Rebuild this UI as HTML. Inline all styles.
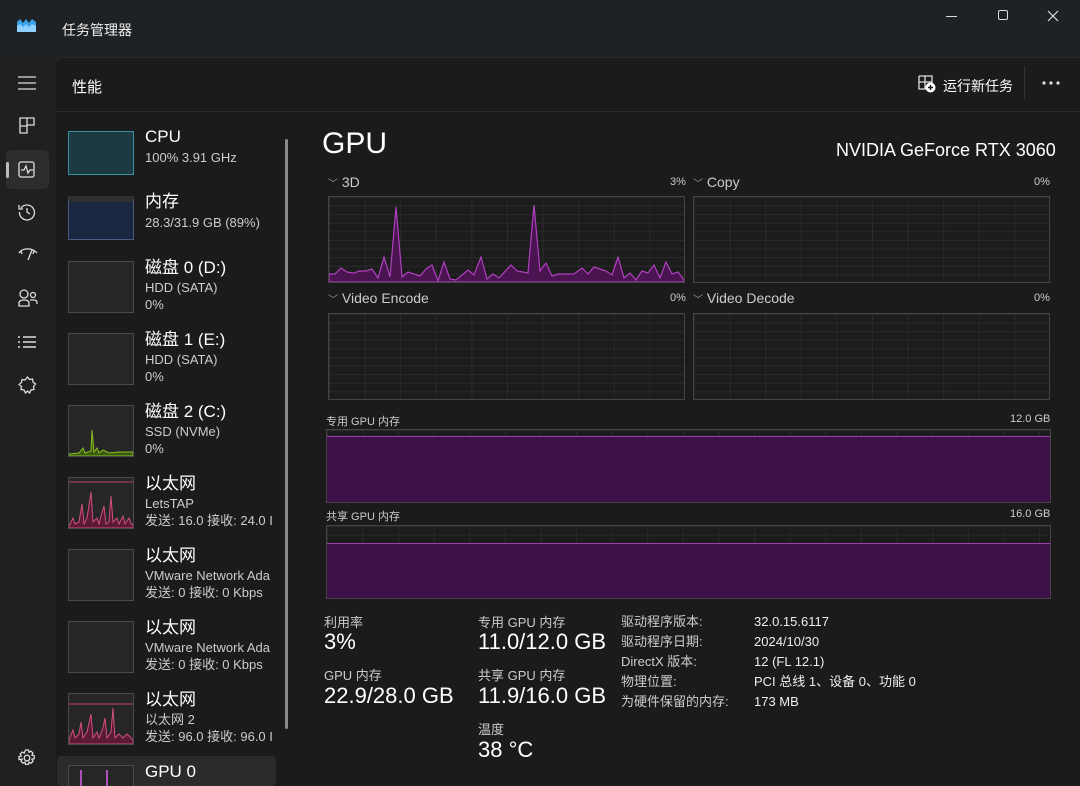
<!DOCTYPE html><html><head><meta charset="utf-8"><style>
*{margin:0;padding:0;box-sizing:border-box}
html,body{width:1080px;height:786px;overflow:hidden}
body{background:#1f2225;font-family:"Liberation Sans","Noto Sans CJK SC",sans-serif;color:#fff;position:relative}
.a{position:absolute}
.t{white-space:nowrap}
.nav{left:0;top:57px;width:56px;height:729px;background:#202020}
.main{left:56px;top:57px;width:1024px;height:729px;background:#1b1b1b;border-top-left-radius:8px;border-top:1px solid #2a2a2a}
.thumb{position:absolute;left:68px;width:66px;height:52px;border:1px solid #4a4a4a;background:#262626;overflow:hidden}
.sn{position:absolute;left:145px;font-size:17px;line-height:20px;color:#fff;white-space:nowrap}
.ss{position:absolute;left:145px;width:131px;overflow:hidden;white-space:nowrap;font-size:13px;color:#ccc;line-height:17px}
.box{position:absolute;border:1px solid #444;background:#1c1c1c;background-image:linear-gradient(#2a2a2a 1px,transparent 1px),linear-gradient(90deg,#2a2a2a 1px,transparent 1px);background-size:100% 8.6px,35.6px 100%}
.lbl{position:absolute;font-size:14px;color:#ccc}
.pct{position:absolute;font-size:11px;color:#ccc}
.ic{stroke:#ddd;fill:none;stroke-width:1.3}
.big{font-size:22px}
</style></head><body>
<svg class="a" style="left:17px;top:18px" width="19" height="14"><path d="M0 14V4l3-3 3 4 3-4 3 4 3-4 4 3v10z" fill="#3aa0e8"/><path d="M0 14V8l3-2 3 3 3-3 3 3 3-3 4 2v6z" fill="#8fd0ff"/></svg>
<div class="a t" style="left:62px;top:20px;font-size:14px;color:#eee">任务管理器</div>
<div class="a" style="left:946px;top:16px;width:11px;height:1px;background:#ddd"></div>
<div class="a" style="left:998px;top:10px;width:10px;height:10px;border:1px solid #ddd;border-radius:2px"></div>
<svg class="a" style="left:1047px;top:10px" width="12" height="12"><path d="M1 1L11 11M11 1L1 11" stroke="#ddd" stroke-width="1.2"/></svg>
<div class="a nav"></div>
<div class="a main"></div>
<svg class="a" style="left:18px;top:76px" width="18" height="14"><path d="M0 1h18M0 7h18M0 13h18" stroke="#ddd" stroke-width="1.3"/></svg>
<svg class="a" style="left:19px;top:117px" width="17" height="17"><path class="ic" d="M1 1h7v15H1zM8 1h7v7H8zM1 9h7"/></svg>
<div class="a" style="left:6px;top:150px;width:43px;height:39px;background:#2d2d2d;border-radius:5px"></div>
<div class="a" style="left:6px;top:162px;width:3px;height:16px;background:#bbb;border-radius:2px"></div>
<svg class="a" style="left:18px;top:161px" width="18" height="17"><rect class="ic" x="1" y="1" width="15" height="15" rx="2"/><path class="ic" d="M3 9h3l2-4 2 7 2-3h3"/></svg>
<svg class="a" style="left:18px;top:203px" width="18" height="18"><path class="ic" d="M3 5A7.5 7.5 0 1 1 1.5 9M1 2v4h4M9 5v4l3 2"/></svg>
<svg class="a" style="left:18px;top:247px" width="20" height="14"><path class="ic" d="M1 6C4 1 14 0 19 6M10 13l4-10M3 4l1 3M16 4l-1 3"/></svg>
<svg class="a" style="left:18px;top:289px" width="20" height="18"><circle class="ic" cx="6" cy="5" r="4"/><circle class="ic" cx="15" cy="6" r="2.5"/><path class="ic" d="M1 17v-3c0-2 2-3 5-3s5 1 5 3v3zM12 11h4c2 0 3 1 3 3v1"/></svg>
<svg class="a" style="left:18px;top:336px" width="18" height="13"><path d="M0 1h2M0 6h2M0 11h2M5 1h13M5 6h13M5 11h13" stroke="#ddd" stroke-width="1.4"/></svg>
<svg class="a" style="left:18px;top:376px" width="19" height="19"><path class="ic" d="M9.5 1l2 2.5 3-.5.5 3 2.5 2-2 2.5.5 3-3 .5-1.5 3-2-2-2 2-1.5-3-3-.5.5-3L1 8.5 3.5 6.5 4 3.5l3 .5z"/></svg>
<svg class="a" style="left:18px;top:749px" width="18" height="18"><circle class="ic" cx="9" cy="9" r="2.8"/><path class="ic" d="M7.5 1h3l.5 2.3 2-1.1 2 2-1.1 2 2.3.5v3l-2.3.5 1.1 2-2 2-2-1.1-.5 2.3h-3l-.5-2.3-2 1.1-2-2 1.1-2L1 10.5v-3l2.3-.5-1.1-2 2-2 2 1.1z"/></svg>
<div class="a t" style="left:72px;top:76px;font-size:15px">性能</div>
<div class="a" style="left:56px;top:111px;width:1024px;height:1px;background:#2c2c2c"></div>
<svg class="a" style="left:918px;top:75px" width="18" height="18"><path class="ic" d="M1 1h13v7M1 1v13h8M1 7h13M7 1v13"/><circle cx="12.5" cy="12.5" r="5" fill="#fff"/><path d="M12.5 10v5M10 12.5h5" stroke="#1b1b1b" stroke-width="1.4"/></svg>
<div class="a t" style="left:943px;top:76px;font-size:14px">运行新任务</div>
<div class="a" style="left:1024px;top:66px;width:1px;height:34px;background:#333"></div>
<svg class="a" style="left:1042px;top:81px" width="18" height="4"><circle cx="2" cy="2" r="1.6" fill="#ddd"/><circle cx="9" cy="2" r="1.6" fill="#ddd"/><circle cx="16" cy="2" r="1.6" fill="#ddd"/></svg>
<div class="a" style="left:285px;top:139px;width:3px;height:590px;background:#8a8a8a;border-radius:2px"></div>
<div class="a" style="left:57px;top:756px;width:219px;height:30px;background:#2b2b2b;border-radius:4px"></div>
<div class="thumb" style="top:131px;height:44px;background:#1c3a42;border-color:#3a8fa0"></div>
<div class="sn" style="top:127px">CPU</div><div class="ss" style="top:149px">100% 3.91 GHz</div>
<div class="thumb" style="top:196px;height:44px;background:#1a2740;border-color:#4a5a80;border-top:6px solid #2f2f2f"></div>
<div class="sn" style="top:192px">内存</div><div class="ss" style="top:214px">28.3/31.9 GB (89%)</div>
<div class="thumb" style="top:261px"></div>
<div class="sn" style="top:258px">磁盘 0 (D:)</div><div class="ss" style="top:279px">HDD (SATA)<br>0%</div>
<div class="thumb" style="top:333px"></div>
<div class="sn" style="top:330px">磁盘 1 (E:)</div><div class="ss" style="top:351px">HDD (SATA)<br>0%</div>
<div class="thumb" style="top:405px"><svg width="64" height="50" style="position:absolute;left:0;top:0"><path d="M0 48L10 47 14 42 16 47 22 45 23 24 25 46 28 42 30 47 34 44 40 47 50 46 64 46V50H0z" fill="#3a5a10" stroke="#8ac020"/></svg></div>
<div class="sn" style="top:402px">磁盘 2 (C:)</div><div class="ss" style="top:423px">SSD (NVMe)<br>0%</div>
<div class="thumb" style="top:477px"><svg width="64" height="50" style="position:absolute;left:0;top:0"><path d="M0 4H64" stroke="#c04070"/><path d="M0 48L4 40 6 46 10 44 13 26 15 46 18 40 22 14 24 44 28 40 30 46 32 38 35 28 37 46 40 44 42 18 44 44 48 40 50 46 54 38 56 46 60 40 62 46 64 46V50H0z" fill="#5a1a35" stroke="#d05080"/></svg></div>
<div class="sn" style="top:474px">以太网</div><div class="ss" style="top:495px">LetsTAP<br>发送: 16.0 接收: 24.0 I</div>
<div class="thumb" style="top:549px"></div>
<div class="sn" style="top:546px">以太网</div><div class="ss" style="top:567px">VMware Network Ada<br>发送: 0 接收: 0 Kbps</div>
<div class="thumb" style="top:621px"></div>
<div class="sn" style="top:618px">以太网</div><div class="ss" style="top:639px">VMware Network Ada<br>发送: 0 接收: 0 Kbps</div>
<div class="thumb" style="top:693px"><svg width="64" height="50" style="position:absolute;left:0;top:0"><path d="M0 10H64" stroke="#c04070"/><path d="M0 46L4 36 6 44 10 40 12 28 14 44 18 38 22 20 24 44 28 38 30 44 34 34 36 24 38 44 42 38 44 14 46 44 50 40 54 44 58 40 62 44 64 46V50H0z" fill="#5a1a35" stroke="#d05080"/></svg></div>
<div class="sn" style="top:690px">以太网</div><div class="ss" style="top:711px">以太网 2<br>发送: 96.0 接收: 96.0 I</div>
<div class="thumb" style="top:765px;height:21px;border-bottom:none"><div class="a" style="left:11px;top:4px;width:2px;height:20px;background:#b050c0"></div><div class="a" style="left:37px;top:4px;width:2px;height:20px;background:#b050c0"></div></div>
<div class="sn" style="top:762px">GPU 0</div>
<div class="a t" style="left:322px;top:127px;font-size:30px">GPU</div>
<div class="a t" style="left:836px;top:140px;font-size:18px">NVIDIA GeForce RTX 3060</div>
<div class="lbl" style="left:328px;top:174px"><span style="font-size:10px;color:#999">﹀</span> 3D</div><div class="pct" style="left:670px;top:176px">3%</div>
<div class="lbl" style="left:693px;top:174px"><span style="font-size:10px;color:#999">﹀</span> Copy</div><div class="pct" style="left:1034px;top:176px">0%</div>
<div class="box" style="left:328px;top:196px;width:357px;height:87px"><svg width="355" height="85" style="position:absolute;left:0;top:0"><path d="M0 77L6 77 12 71 18 75 25 76 30 74 37 74 43 72 49 81 55 60 61 80 67 10 73 80 79 75 91 79 97 72 103 68 109 84 115 65 121 82 127 83 139 73 145 78 152 60 158 82 164 77 170 81 182 68 188 74 199 76 205 8 211 74 217 66 223 79 229 77 245 77 253 71 259 77 265 70 277 74 283 78 289 60 295 81 301 76 307 83 313 74 319 76 325 68 331 81 337 65 343 77 349 75 355 83V85H0z" fill="#4a1450" stroke="#b040c0" stroke-width="1.2"/></svg></div>
<div class="box" style="left:693px;top:196px;width:357px;height:87px"></div>
<div class="lbl" style="left:328px;top:290px"><span style="font-size:10px;color:#999">﹀</span> Video Encode</div><div class="pct" style="left:670px;top:292px">0%</div>
<div class="lbl" style="left:693px;top:290px"><span style="font-size:10px;color:#999">﹀</span> Video Decode</div><div class="pct" style="left:1034px;top:292px">0%</div>
<div class="box" style="left:328px;top:313px;width:357px;height:87px"></div>
<div class="box" style="left:693px;top:313px;width:357px;height:87px"></div>
<div class="pct" style="left:326px;top:413px">专用 GPU 内存</div><div class="pct" style="left:1010px;top:413px">12.0 GB</div>
<div class="box" style="left:326px;top:429px;width:725px;height:74px"><div class="a" style="left:0;top:6px;right:0;bottom:0;background:#3e1248;border-top:1px solid #9a40b0"></div></div>
<div class="pct" style="left:326px;top:508px">共享 GPU 内存</div><div class="pct" style="left:1010px;top:508px">16.0 GB</div>
<div class="box" style="left:326px;top:525px;width:725px;height:74px"><div class="a" style="left:0;top:17px;right:0;bottom:0;background:#3e1248;border-top:1px solid #9a40b0"></div></div>
<div class="a t" style="left:324px;top:612px;font-size:13px;color:#ccc">利用率</div>
<div class="a t big" style="left:324px;top:629px">3%</div>
<div class="a t" style="left:324px;top:665px;font-size:13px;color:#ccc">GPU 内存</div>
<div class="a t big" style="left:324px;top:683px">22.9/28.0 GB</div>
<div class="a t" style="left:478px;top:612px;font-size:13px;color:#ccc">专用 GPU 内存</div>
<div class="a t big" style="left:478px;top:629px">11.0/12.0 GB</div>
<div class="a t" style="left:478px;top:665px;font-size:13px;color:#ccc">共享 GPU 内存</div>
<div class="a t big" style="left:478px;top:683px">11.9/16.0 GB</div>
<div class="a t" style="left:478px;top:719px;font-size:13px;color:#ccc">温度</div>
<div class="a t big" style="left:478px;top:737px">38 °C</div>
<div class="a t" style="left:621px;top:612px;font-size:13px;line-height:20px;color:#ccc">驱动程序版本:<br>驱动程序日期:<br>DirectX 版本:<br>物理位置:<br>为硬件保留的内存:</div>
<div class="a t" style="left:754px;top:612px;font-size:13px;line-height:20px;color:#eee">32.0.15.6117<br>2024/10/30<br>12 (FL 12.1)<br>PCI 总线 1、设备 0、功能 0<br>173 MB</div>
</body></html>
